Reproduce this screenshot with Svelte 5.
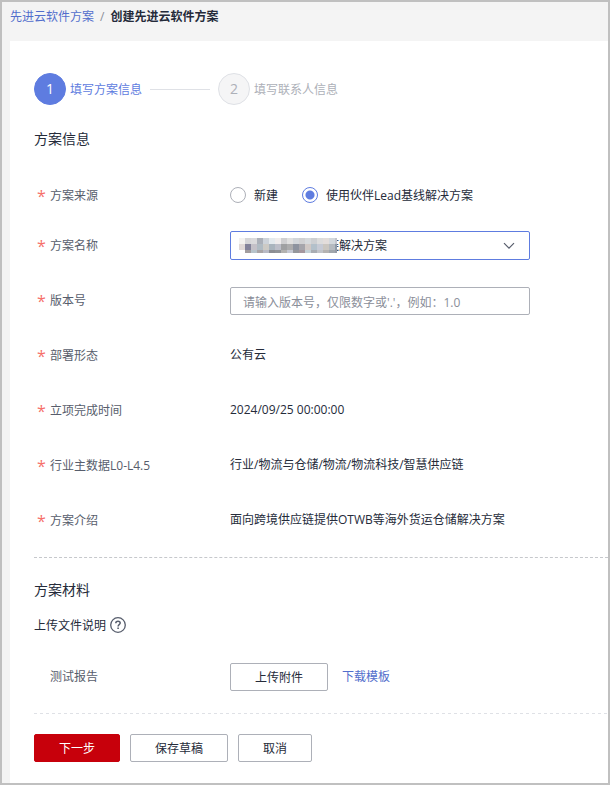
<script>
  let source = $state('lead');
  let version = $state('');

  const details = [
    { label: '部署形态', value: '公有云' },
    { label: '立项完成时间', value: '2024/09/25 00:00:00' },
    { label: '行业主数据L0-L4.5', value: '行业/物流与仓储/物流/物流科技/智慧供应链' },
    { label: '方案介绍', value: '面向跨境供应链提供OTWB等海外货运仓储解决方案' }
  ];

  // Mosaic that hides the partner's name inside the selected option.
  const mosaic = [
    ['#f4f3f0', '#d6d6d8', '#dadadc', '#abb0b9', '#cdd3da', '#e4eaee', '#efecec', '#cfcfd1', '#e0e0e0', '#d2d6da', '#d0d0d2', '#d6d9dc', '#cdcfd2', '#dcdcdc', '#e3dddb', '#d3d8dd', '#c3c5cd'],
    ['#e0d9d7', '#83839a', '#c4c1c8', '#b0bbc3', '#cccac5', '#aab5be', '#bdbfc9', '#9fa0a2', '#acacad', '#8d939f', '#a6a5ab', '#d0c8c5', '#b3c0ca', '#c6cad5', '#cac6c0', '#b5bac0', '#8f9aa8'],
    ['#ffffff', '#a29d9f', '#b7c3ca', '#a9a5a6', '#b9bac4', '#8b8d93', '#909398', '#b3b2b0', '#c6c9d3', '#95979c', '#a5979f', '#c5d1d7', '#a9adb3', '#c2c4c9', '#b5b3b2', '#a0a6ac', '#959ba7']
  ];
</script>

<div class="page">
  <nav class="breadcrumb" aria-label="breadcrumb">
    <a href="#list">先进云软件方案</a>
    <span class="slash">/</span>
    <strong>创建先进云软件方案</strong>
  </nav>

  <main class="panel">
    <ol class="steps">
      <li class="step active"><span class="dot">1</span><span class="caption">填写方案信息</span></li>
      <li class="line" aria-hidden="true"></li>
      <li class="step"><span class="dot">2</span><span class="caption">填写联系人信息</span></li>
    </ol>

    <form onsubmit={(e) => e.preventDefault()}>
      <h2>方案信息</h2>

      <div class="fields">
        <div class="row first" role="radiogroup" aria-labelledby="source-label">
          <span class="label" id="source-label"><span class="star">*</span>方案来源</span>
          <div class="value radios">
            <label><input type="radio" name="source" value="new" bind:group={source} /><span class="caption">新建</span></label>
            <label><input type="radio" name="source" value="lead" bind:group={source} /><span class="caption">使用伙伴Lead基线解决方案</span></label>
          </div>
        </div>

        <div class="row">
          <label class="label" for="plan"><span class="star">*</span>方案名称</label>
          <div class="value select">
            <select id="plan">
              <option>链解决方案</option>
            </select>
            <svg class="mosaic" width="98" height="15" viewBox="0 0 98 15" shape-rendering="crispEdges" aria-hidden="true">
              {#each mosaic as cells, r}
                {#each cells as fill, c}
                  <rect x={c * 6} y={r * 6} width="6" height="6" {fill} />
                {/each}
              {/each}
            </svg>
            <svg class="chevron" width="12" height="8" viewBox="0 0 12 8" aria-hidden="true">
              <path d="M1 1.2 6 6.2 11 1.2" fill="none" stroke="#575d6c" stroke-width="1.2" />
            </svg>
          </div>
        </div>

        <div class="row">
          <label class="label" for="version"><span class="star">*</span>版本号</label>
          <div class="value">
            <input id="version" class="text" type="text" placeholder="请输入版本号，仅限数字或'.'，例如：1.0" bind:value={version} />
          </div>
        </div>

        {#each details as item}
          <div class="row">
            <span class="label"><span class="star">*</span>{item.label}</span>
            <div class="value">{item.value}</div>
          </div>
        {/each}
      </div>

      <hr />

      <h2>方案材料</h2>
      <p class="note">
        <span class="caption">上传文件说明</span>
        <svg width="16" height="16" viewBox="0 0 16 16" fill="none" stroke="#575d6c" role="img" aria-label="帮助">
          <circle cx="8" cy="8" r="7.3" stroke-width="1.3" />
          <path d="M5.8 6.3C5.8 4.9 6.7 4.2 8 4.2s2.2.8 2.2 1.9c0 1.5-2.1 1.7-2.1 3.3" stroke-width="1.5" />
          <path d="M8.1 10.6v1.5" stroke-width="1.6" />
        </svg>
      </p>

      <div class="row">
        <span class="label bare">测试报告</span>
        <div class="value upload">
          <button type="button">上传附件</button>
          <a href="#template">下载模板</a>
        </div>
      </div>

      <hr class="light" />

      <div class="actions">
        <button type="submit" class="primary">下一步</button>
        <button type="button">保存草稿</button>
        <button type="button">取消</button>
      </div>
    </form>
  </main>
</div>

<style>
  .page {
    box-sizing: border-box;
    min-height: 100vh;
    display: flex;
    flex-direction: column;
    border: 2px solid #c0c0c0;
    padding-left: 8px;
    background: #f4f4f4;
    color: #252b3a;
    font: 12px/20px "Open Sans", "Noto Sans CJK SC", sans-serif;
  }

  a {
    color: #526ecc;
    text-decoration: none;
  }

  .breadcrumb {
    display: flex;
    gap: 6px;
    padding: 5px 0 14px;
  }

  .slash {
    color: #8a8e99;
  }

  .panel {
    flex: 1;
    padding: 32px 0 20px 24px;
    background: #fff;
  }

  .steps {
    display: flex;
    align-items: center;
    margin: 0 0 24px;
    padding: 0;
    list-style: none;
  }

  .step {
    display: flex;
    align-items: center;
    gap: 4px;
    color: #adb0b8;
  }

  .step.active {
    color: #5e7ce0;
  }

  .caption {
    padding-top: 2px;
  }

  .dot {
    box-sizing: border-box;
    width: 32px;
    height: 32px;
    border: 1px solid #dfe1e6;
    border-radius: 50%;
    background: #f5f5f6;
    font-size: 14px;
    line-height: 30px;
    text-align: center;
  }

  .active .dot {
    border-color: #5e7ce0;
    background: #5e7ce0;
    color: #fff;
  }

  .line {
    width: 60px;
    height: 1px;
    margin: 0 8px;
    background: #dfe1e6;
  }

  h2 {
    margin: 0;
    font-size: 14px;
    font-weight: 400;
    line-height: 20px;
  }

  .fields {
    display: flex;
    flex-direction: column;
    gap: 25px;
    margin-top: 32px;
  }

  .row {
    display: flex;
  }

  .row.first {
    margin-bottom: -5px;
  }

  .label {
    flex: none;
    display: flex;
    box-sizing: border-box;
    width: 196px;
    padding-left: 3px;
    color: #575d6c;
    line-height: 30px;
  }

  .label.bare {
    padding-left: 16px;
    line-height: 28px;
  }

  .star {
    width: 13px;
    height: 30px;
    color: #f66f6a;
    font-size: 16px;
    line-height: 30px;
  }

  .value {
    flex: 1;
    line-height: 28px;
  }

  .radios {
    display: flex;
    gap: 24px;
  }

  .radios label {
    display: flex;
    align-items: center;
    gap: 8px;
    height: 28px;
    line-height: 20px;
  }

  input[type='radio'] {
    appearance: none;
    box-sizing: border-box;
    width: 16px;
    height: 16px;
    margin: 0;
    border: 1px solid #adb0b8;
    border-radius: 50%;
    background: #fff;
  }

  input[type='radio']:checked {
    border-color: #5e7ce0;
    background: radial-gradient(circle, #5e7ce0 0 4px, #fff 5px);
  }

  .select {
    position: relative;
    max-width: 300px;
    height: 30px;
  }

  select,
  .text {
    display: block;
    box-sizing: border-box;
    width: 100%;
    max-width: 300px;
    border: 1px solid #adb0b8;
    border-radius: 2px;
    background: #fff;
    color: #252b3a;
    font: inherit;
    line-height: 20px;
    outline: none;
  }

  select {
    appearance: none;
    height: 29px;
    padding: 0 32px 0 96px;
    border-color: #5e7ce0;
  }

  .text {
    height: 28px;
    margin: 1px 0;
    padding: 2px 12px 0;
  }

  .text::placeholder {
    color: #8a8e99;
    opacity: 1;
  }

  .mosaic {
    position: absolute;
    top: 7px;
    left: 9px;
    pointer-events: none;
  }

  .chevron {
    position: absolute;
    top: 11px;
    right: 15px;
    pointer-events: none;
  }

  hr {
    height: 0;
    margin: 21px 0 22px;
    border: 0;
    border-top: 1px dashed #c6c8cc;
  }

  hr.light {
    height: 1px;
    margin: 22px 0 20px;
    border: 0;
    background: repeating-linear-gradient(90deg, #dfe1e6 0 3px, transparent 3px 6px);
  }

  .note {
    display: flex;
    align-items: center;
    gap: 4px;
    margin: 14px 0 27px;
  }

  .upload {
    display: flex;
    gap: 14px;
  }

  .actions {
    display: flex;
    gap: 10px;
  }

  button {
    box-sizing: border-box;
    height: 28px;
    padding: 2px 24px 0;
    border: 1px solid #adb0b8;
    border-radius: 2px;
    background: #fff;
    color: #252b3a;
    font: inherit;
    line-height: 20px;
    cursor: pointer;
  }

  .primary {
    border-color: #c7000b;
    background: #c7000b;
    color: #fff;
  }
</style>
